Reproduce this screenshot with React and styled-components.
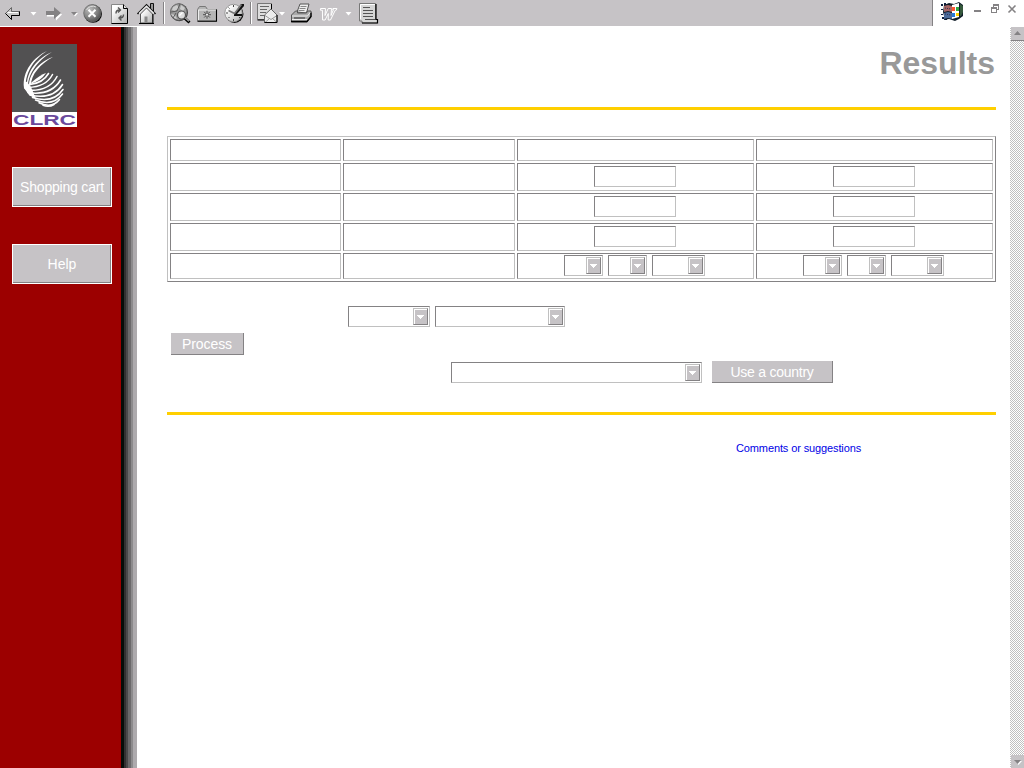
import React from 'react';
import styled, { createGlobalStyle, css } from 'styled-components';

const face = '#c6c3c6';
const shade = '#848284';
const light = '#c0c0c0';

const GlobalStyle = createGlobalStyle`
  * { box-sizing: border-box; }
  body { margin: 0; background: #fff; overflow: hidden; font-family: "Liberation Sans", Arial, sans-serif; }
  button { font-family: inherit; }
`;

const Screen = styled.div`
  display: flex;
  flex-direction: column;
  width: 1024px;
  height: 768px;
  background: #fff;
`;

const TopBar = styled.header`
  display: flex;
  flex: none;
  height: 27px;
  border-bottom: 1px solid #fff;
`;

const Tools = styled.div`
  width: 933px;
  height: 26px;
  background: ${face};
  border-right: 1px solid ${shade};
`;

const WindowArea = styled.div`
  width: 91px;
  height: 26px;
`;

const Drawing = styled.svg`
  display: block;
`;

const Body = styled.div`
  display: flex;
  flex: 1;
  min-height: 0;
`;

const Sidebar = styled.nav`
  display: flex;
  flex-direction: column;
  align-items: flex-start;
  width: 121px;
  padding: 17px 0 0 12px;
  background: #9c0000;
`;

const Edge = styled.div`
  width: 16px;
  background: linear-gradient(to right,
    #080c08 0 3px, #313031 3px 5px, #4a494a 5px 7px,
    #6b696b 7px 10px, #8c8a8c 10px 12px, #adaaad 12px 16px);
`;

const Logo = styled.div`
  width: 65px;
  height: 83px;
  margin-bottom: 40px;
  background: #fff;
`;

const SideButton = styled.button`
  width: 100px;
  height: 40px;
  margin-bottom: 37px;
  padding: 0;
  border: 1px solid #fff;
  border-radius: 0;
  background: ${face};
  box-shadow: inset -1px -1px 0 ${shade};
  color: #fff;
  font-size: 14px;
  line-height: 16px;
  letter-spacing: ${(p) => p.$spacing || '0'};
  white-space: nowrap;
`;

const Main = styled.main`
  display: flex;
  flex-direction: column;
  width: 859px;
  padding: 16px 0 0 30px;
`;

const Title = styled.h1`
  height: 40px;
  margin: 0 0 24px;
  padding-right: 1px;
  color: #999;
  font-size: 32px;
  line-height: 40px;
  text-align: right;
`;

const Rule = styled.hr`
  flex: none;
  width: 829px;
  height: 3px;
  margin: 0;
  border: 0;
  background: #ffcf00;
`;

const sunken = css`
  border: 1px solid;
  border-color: ${shade} ${light} ${light} ${shade};
`;

const Grid = styled.div`
  display: grid;
  flex: none;
  grid-template-columns: 171px 172px 237px 237px;
  grid-template-rows: 22px 28px 28px 28px 26px;
  gap: 2px;
  width: 829px;
  height: 146px;
  margin-top: 26px;
  padding: 2px;
  border: 1px solid;
  border-color: ${light} ${shade} ${shade} ${light};
`;

const Cell = styled.div`
  ${sunken}
  display: flex;
  align-items: flex-start;
  justify-content: center;
  gap: 5px;
  padding-top: ${(p) => (p.$tight ? 1 : 2)}px;
  padding-right: ${(p) => (p.$tight ? 2 : 1)}px;
`;

const TextField = styled.input`
  ${sunken}
  width: 82px;
  height: 21px;
  padding: 0 3px;
  border-radius: 0;
  background: #fff;
`;

const SelectBox = styled.div`
  ${sunken}
  display: flex;
  justify-content: flex-end;
  flex: none;
  width: ${(p) => p.$width}px;
  height: 21px;
  padding: 1px 1px 1px 0;
`;

const DropButton = styled.div`
  width: 15px;
  height: 17px;
  padding: 6px 0 0 3px;
  border: 1px solid;
  border-color: ${light} ${shade} ${shade} ${light};
  background: ${face};
  box-shadow: inset 1px 1px 0 #fff;
`;

const FormRow = styled.div`
  display: flex;
  flex: none;
  gap: ${(p) => p.$gap || 0}px;
  margin-top: ${(p) => p.$top}px;
  padding-left: ${(p) => p.$left}px;
  height: ${(p) => p.$height}px;
  align-items: flex-end;
`;

const ActionButton = styled.button`
  width: ${(p) => p.$width}px;
  height: 22px;
  padding: 0;
  border: 0;
  border-right: 1px solid ${shade};
  border-bottom: 1px solid ${shade};
  border-radius: 0;
  background: ${face};
  color: #fff;
  font-size: 14px;
  line-height: 16px;
  letter-spacing: ${(p) => p.$spacing};
`;

const Footer = styled.footer`
  margin-top: 27px;
  padding-left: 569px;
  line-height: 13px;
  font-size: 11px;
`;

const Link = styled.a`
  display: block;
  color: #0000e6;
  letter-spacing: -0.12px;
  text-decoration: none;
  white-space: nowrap;
`;

const Scrollbar = styled.div`
  display: flex;
  flex-direction: column;
  justify-content: space-between;
  align-items: flex-end;
  width: 14px;
  margin-left: auto;
  background: repeating-conic-gradient(${light} 0 25%, #fff 0 50%) 0 0 / 2px 2px;
`;

const ScrollButton = styled.div`
  width: 13px;
  height: ${(p) => p.$height}px;
  background: ${face};
  border-bottom: ${(p) => (p.$line ? `1px solid ${shade}` : '0')};
`;

function Select({ width }) {
  return (
    <SelectBox $width={width}>
      <DropButton>
        <Drawing width="7" height="4" shapeRendering="crispEdges">
          <path d="M0 0H7V1H6V2H5V3H4V4H3V3H2V2H1V1H0Z" fill="#fff" />
        </Drawing>
      </DropButton>
    </SelectBox>
  );
}

function Caret({ x, color = '#fff' }) {
  return <path d={`M${x} 12h6l-3 3.5z`} fill={color} />;
}

function Divider({ x }) {
  return (
    <g shapeRendering="crispEdges">
      <path d={`M${x} 2v22`} stroke={shade} transform="translate(.5 0)" />
      <path d={`M${x + 1} 2v22`} stroke="#fff" transform="translate(.5 0)" />
    </g>
  );
}

function ToolIcons() {
  return (
    <Drawing width="932" height="26" viewBox="0 0 932 26">
      <defs>
        <radialGradient id="ball" cx=".35" cy=".3" r=".75">
          <stop offset="0" stopColor="#bdbdbd" />
          <stop offset=".6" stopColor="#848484" />
          <stop offset="1" stopColor="#505050" />
        </radialGradient>
        <linearGradient id="paper" x2="1" y2="1">
          <stop offset=".2" stopColor="#fff" />
          <stop offset="1" stopColor="#adadad" />
        </linearGradient>
      </defs>

      {/* back and forward */}
      <path d="M5.5 13.5 11.5 7.5V11.5H19.5V15.5H11.5V19.5Z" fill="#c8c8c8" stroke="#666" />
      <path d="M5.5 13.5 11.5 19.5V15.5H19.5V11.5" fill="none" stroke="#000" />
      <path d="M7.500 12.5H18" stroke="#fff" />
      <Caret x={30.5} />
      <path d="M47 12.5h8v-4l7 6-6 6v-4h-9z" fill="#fff" />
      <path d="M46 11h8V7l7 6-7 6v-4h-8z" fill={shade} />
      <path d="M72 13h6l-3 3.5z" fill="#fff" />
      <Caret x={71} color={shade} />

      {/* stop */}
      <circle cx="93" cy="13.8" r="9" fill="#080808" />
      <circle cx="92.3" cy="13.1" r="8.6" fill="url(#ball)" stroke="#6b6b6b" strokeWidth=".8" />
      <path d="M86.500 10A7 7 0 0 1 96 7" fill="none" stroke="#ddd" />
      <path d="m88.500 9.8 7 7m0-7-7 7" stroke="#fff" strokeWidth="2" />

      {/* refresh */}
      <path d="M111.5 4.5h12l4 4v15h-16z" fill="url(#paper)" stroke="#888" />
      <path d="M123.5 4.5v4h4V23.5h-16" fill="none" stroke="#000" />
      <path d="M116 13.500q0-3.500 3.500-3.500m-1.500-2.500 2.500 2.500-2.500 2.500m5.500 2q0 3.500-3.500 3.500m1.500 2.500-2.500-2.500 2.500-2.500" fill="none" stroke="#555" strokeWidth="1.4" />

      {/* home */}
      <path d="M150.500 8V3.5h3V11" fill="#999" stroke="#111" />
      <path d="M140.5 14v9h12v-9l-6-6z" fill="url(#paper)" stroke="#555" />
      <path d="m137.5 14 9-9 9 9" fill="none" stroke="#111" strokeWidth="1.6" />
      <path d="m139 13.500 7.500-7.500 7.500 7.500" fill="none" stroke="#eee" strokeWidth="1.2" />
      <path d="M144.500 16.500h3v6h-3z" fill="#888" />
      <path d="M139 23.5h15M153 14v9" stroke="#000" />
      <Divider x={163} />

      {/* search */}
      <circle cx="179.200" cy="12.400" r="8.8" fill="#333" />
      <circle cx="178.700" cy="12" r="8.3" fill="#999" stroke="#666" strokeWidth=".8" />
      <path d="m173 7 4-2 2 3-4 3-3-1zm8-2 4 3-2 3-3-2zm-10 9 4 1 2 4-3-1z" fill="#ccc" />
      <path d="m171 12 6-1 3-7m-7 14 3-5" fill="none" stroke="#555" strokeWidth=".9" />
      <path d="m184.500 18 5 4.500" stroke="#000" strokeWidth="3" />
      <path d="m184.500 17.300 4.500 4" stroke="#aaa" strokeWidth="1.300" />
      <circle cx="181.500" cy="15" r="4" fill="#ddd" stroke="#555" strokeWidth="1.2" />
      <path d="m179.500 15.500 3-3" stroke="#fff" strokeWidth="1.3" />

      {/* favourites */}
      <path d="M197.5 20.5V9.5l2-3h6l2 3h9v11.5h-19z" fill="#b5b5b5" stroke="#777" />
      <path d="M198.5 20V10h17.5" fill="none" stroke="#eee" />
      <path d="M216.5 9.5v11.7h-19" fill="none" stroke="#000" strokeWidth="1.1" />
      <path d="M203 14.7h8m-4-4v8m-2.8-6.8 5.6 5.6m0-5.6-5.6 5.6" stroke="#333" strokeWidth=".8" />
      <circle cx="207" cy="14.7" r="1" fill="#fff" />

      {/* history */}
      <circle cx="234.500" cy="13.900" r="9" fill="#111" />
      <circle cx="233.500" cy="13" r="8.7" fill="url(#paper)" stroke="#999" />
      <path d="M233.5 5v2m-7.5 6h2m5.5 6v2m6-6h2m-13-7.5 1 1m-1 9.500 1-1m9.500 0 1 1" stroke="#444" />
      <path d="m234 14 7-10h3v2l-7 8h5v2h-8z" fill="#111" />
      <path d="m228.500 10.500 6 3 7-9" fill="none" stroke="#777" strokeWidth="1.500" />
      <Divider x={250} />

      {/* mail */}
      <path d="M257.5 3.5h14v16h-14z" fill="#ddd" stroke="#777" />
      <path d="M271.5 4v8m-14 8h8" stroke="#000" />
      <path d="M260 6.5h9m-9 3h7m-7 3h6m-6 3h4" stroke="#666" />
      <path d="m264.5 15 6.5-6 6 6v7.5h-12.5z" fill="#ececec" stroke="#666" />
      <path d="m265 15.5 6 4 6-4m-12 7 4.5-4m7.5 4-4.5-4" fill="none" stroke="#999" />
      <path d="M277 15v7.5h-12.5" fill="none" stroke="#000" />
      <Caret x={279} />

      {/* print */}
      <path d="m297 12 3-8h9l-2.5 9z" fill="#eee" stroke="#555" />
      <path d="M300.5 6.5h6m-7 2h6m-7 2h6" stroke="#888" />
      <path d="m291.5 15 4-4h2v2h9l1-2h3.5v6l-4 5h-15.5z" fill="#aaa" stroke="#555" />
      <path d="M292 16h15.5l3-4M292 19.5h15" fill="none" stroke="#eee" />
      <path d="M291 21.5h16l4-5v-4" fill="none" stroke="#000" strokeWidth="1.3" />
      <path d="M294 18h11" stroke="#333" />

      {/* word processor */}
      <path d="M320.5 8.5h5l-.5 7 3.2-7h3.3l-.5 7 2.5-6h-1l.4-1h4l-.5 1.5-1.2.4-4.7 9.6h-2.3l.1-6.5-3.2 6.5h-2.5l-.2-9.8h-2z" fill="none" stroke="#fff" strokeWidth="1" />
      <Caret x={345.5} />

      {/* page */}
      <path d="M359.500 3.500h16v16h2v3.500h-15.500v-2h-2.500z" fill="#d6d6d6" stroke="#777" />
      <path d="M376 4v15.500h1.5V23h-15.500" fill="none" stroke="#000" strokeWidth="1.2" />
      <path d="M360.5 19V4.5H375" fill="none" stroke="#fff" />
      <path d="M363 7.5h7m-7 3h10m-10 3h10m-10 3h10M365 19.5h10" stroke="#555" />
    </Drawing>
  );
}

function WindowControls() {
  return (
    <Drawing width="91" height="26" viewBox="933 0 91 26">
      <path d="M941 4h2v2h-2zm3-1h2v2h-2zm-3 6h2v1h-2zm0 5h2v1h-2zm1 3h2v2h-2zm3 2h2v1h-2z" fill="#102040" />
      <path d="m944 5 5-2 5 1 5-2 4 3v11l-4 3-4 2-6-2-5 1v-4l-1-4z" fill="#101c28" />
      <path d="m944 6 4-1 4 1v6l-4-1-4 1z" fill="#a86767" />
      <path d="m944 13 4-1 4 1v6l-4-1-4 1z" fill="#4c6c9c" />
      <path d="m952 5 7-2v14l-7 2z" fill="#fff" />
      <path d="M952 7h3v4h-3z" fill="#ff5531" />
      <path d="M956 7h3v4h-3z" fill="#32a642" />
      <path d="M952 13h3v4h-3z" fill="#2779d8" />
      <path d="M956 13h3v3h-3z" fill="#ffd000" />
      <path d="m960 4 3 2v6l-2 4h-1z" fill="#35583c" />
      <path d="m945 8 6 1m-6 5 6 1" stroke="#303050" strokeDasharray="1 1" />
      <g stroke={shade} fill="none" shapeRendering="crispEdges">
        <path d="M974 11h7" strokeWidth="2" />
        <path d="M993.5 7V4.5h5v5H997M993 5.5h6M991.5 7.5h5v5h-5zM991 8.5h6" />
      </g>
      <path d="m1008.5 5.5 7 7m0-7-7 7" stroke={shade} strokeWidth="1.6" />
    </Drawing>
  );
}

function LogoMark() {
  return (
    <Drawing width="65" height="83" viewBox="0 0 65 83" role="img" aria-label="CLRC">
      <path d="M0 0h65v68H0z" fill="#525152" />
      <g fill="#fff">
        <path d="M35 7C22 13 10 27 12 44L14 46C12 30 21 16 35 7Z" />
        <path d="M40 8C26 14 14 27 15 43L16 45C15 31 25 17 40 8Z" />
        <path d="M41 13C29 17 17 28 17 42L19 41C19 31 28 20 41 13Z" />
        <path d="M34 29Q28 31 20 38L18 40Q29 37 34 29Z" />
        <path d="M12 37 15 38 19 43 24 55 17 51 12 44Z" />
      </g>
      <g fill="none" stroke="#fff" strokeWidth="1.55" strokeLinecap="round">
        <path d="M18 40.500Q31 39 36.500 29.500" />
        <path d="M16 43.500Q34 43 40.500 30.500" />
        <path d="M15 46.200Q37 48 45 32.500" />
        <path d="M16 48.600Q39 52 48.500 36" />
        <path d="M18 51Q41 56 50.500 40.500" />
        <path d="M20.500 53.500Q41 60 51 45.500" />
        <path d="M23.500 56Q41 63 50.500 50" />
        <path d="M27 58.800Q40 65 47.500 55.500" />
        <path d="M31 61.300Q37 63.500 42 60.500" />
      </g>
      <text x="1" y="81" fontFamily="Liberation Sans, Arial, sans-serif" fontWeight="700" fontSize="14" fill="#6b499c" textLength="63" lengthAdjust="spacingAndGlyphs">CLRC</text>
    </Drawing>
  );
}

const rows = ['empty', 'field', 'field', 'field', 'date'];

function CellContent({ kind }) {
  if (kind === 'field') return <TextField />;
  if (kind === 'date') {
    return (
      <>
        <Select width={39} />
        <Select width={39} />
        <Select width={53} />
      </>
    );
  }
  return null;
}

export default function App() {
  return (
    <Screen>
      <GlobalStyle />
      <TopBar>
        <Tools><ToolIcons /></Tools>
        <WindowArea><WindowControls /></WindowArea>
      </TopBar>
      <Body>
        <Sidebar>
          <Logo><LogoMark /></Logo>
          <SideButton $spacing="-0.2px">Shopping cart</SideButton>
          <SideButton>Help</SideButton>
        </Sidebar>
        <Edge />
        <Main>
          <Title>Results</Title>
          <Rule />
          <Grid>
            {rows.map((kind, i) => (
              <React.Fragment key={i}>
                <Cell />
                <Cell />
                <Cell $tight={kind === 'date'}><CellContent kind={kind} /></Cell>
                <Cell $tight={kind === 'date'}><CellContent kind={kind} /></Cell>
              </React.Fragment>
            ))}
          </Grid>
          <FormRow $top={24} $left={181} $height={21} $gap={5}>
            <Select width={82} />
            <Select width={130} />
          </FormRow>
          <FormRow $top={6} $left={4} $height={22}>
            <ActionButton $width={73} $spacing="-0.1px">Process</ActionButton>
          </FormRow>
          <FormRow $top={6} $left={284} $height={22} $gap={10}>
            <Select width={251} />
            <ActionButton $width={121} $spacing="-0.25px">Use a country</ActionButton>
          </FormRow>
          <FormRow $top={0} $left={0} $height={29} />
          <Rule />
          <Footer><Link href="#comments">Comments or suggestions</Link></Footer>
        </Main>
        <Scrollbar>
          <ScrollButton $height={14} $line>
            <Drawing width="13" height="13"><path d="M3 8h7L6.500 4z" fill={shade} /></Drawing>
          </ScrollButton>
          <ScrollButton $height={13}>
            <Drawing width="13" height="13">
              <path d="M4 6h7L7.500 10z" fill="#fff" />
              <path d="M3 5h7L6.500 9z" fill={shade} />
            </Drawing>
          </ScrollButton>
        </Scrollbar>
      </Body>
    </Screen>
  );
}
